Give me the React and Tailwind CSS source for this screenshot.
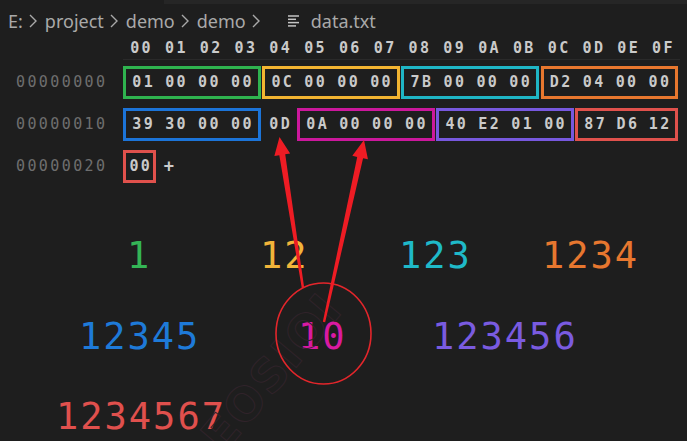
import React from "react";

const mono = { fontFamily: "'DejaVu Sans Mono', monospace" };

const header = ["00", "01", "02", "03", "04", "05", "06", "07", "08", "09", "0A", "0B", "0C", "0D", "0E", "0F"];

const Chevron = () => (
  <svg width="8" height="14" viewBox="0 0 8 14" className="ml-[6px] mr-[8px] shrink-0">
    <polyline points="1,1 7,7 1,13" fill="none" stroke="#a9a9a9" strokeWidth="1.4" />
  </svg>
);

const FileIcon = () => (
  <svg width="12" height="12" viewBox="0 0 12 12" className="ml-[20px] mr-[11px] shrink-0">
    <g stroke="#c5c5c5" strokeWidth="1.5">
      <line x1="0" y1="1" x2="11" y2="1" />
      <line x1="0" y1="4.3" x2="8" y2="4.3" />
      <line x1="0" y1="7.6" x2="11" y2="7.6" />
      <line x1="0" y1="10.9" x2="8" y2="10.9" />
    </g>
  </svg>
);

const Cell = ({ v }) => (
  <span className="w-[34.8px] shrink-0 text-center tracking-[2.4px] pl-[2.4px]">{v}</span>
);

const Group = ({ bytes, border, width }) => (
  <div className={`${width} shrink-0 flex`}>
    <div className={`h-[33px] flex-1 mr-[1.5px] border-[3px] ${border} flex items-center`}>
      {bytes.map((b, i) => (
        <span key={i} className="flex-1 text-center tracking-[2.4px] pl-[2.4px]">
          {b}
        </span>
      ))}
    </div>
  </div>
);

const Row = ({ addr, children }) => (
  <div className="h-[42px] flex items-center">
    <span className="w-[123px] shrink-0 pl-[16px] font-normal text-[#6e6e6e] tracking-[2.4px]">{addr}</span>
    {children}
  </div>
);

export default function App() {
  return (
    <div className="relative w-[687px] h-[441px] overflow-hidden bg-[#1e1e1e]">
      {/* tab strip remnant */}
      <div className="h-[4px] flex">
        <div className="w-[164px]" />
        <div className="flex-1 bg-[#262626]" />
      </div>

      {/* breadcrumb */}
      <div
        className="h-[34px] flex items-center pl-[8px] text-[18px] text-[#a9a9a9]"
        style={{ fontFamily: "'Noto Sans', sans-serif" }}
      >
        <span>E:</span>
        <Chevron />
        <span>project</span>
        <Chevron />
        <span>demo</span>
        <Chevron />
        <span>demo</span>
        <Chevron />
        <FileIcon />
        <span>data.txt</span>
      </div>

      {/* hex editor */}
      <div style={mono} className="text-[15px] text-[#cacaca] font-bold leading-none">
        <div className="h-[22px] flex items-center">
          <div className="w-[123px] shrink-0" />
          <div className="flex h-full items-center border-b border-[#2a2a2a]">
            {header.map((h) => (
              <Cell key={h} v={h} />
            ))}
          </div>
        </div>

        <div className="h-[1px]" />

        <Row addr="00000000">
          <Group width="w-[139.2px]" border="border-[#2fb34f]" bytes={["01", "00", "00", "00"]} />
          <Group width="w-[139.2px]" border="border-[#f2b431]" bytes={["0C", "00", "00", "00"]} />
          <Group width="w-[139.2px]" border="border-[#1fb6c6]" bytes={["7B", "00", "00", "00"]} />
          <Group width="w-[139.2px]" border="border-[#e8772e]" bytes={["D2", "04", "00", "00"]} />
        </Row>
        <Row addr="00000010">
          <Group width="w-[139.2px]" border="border-[#1c74d8]" bytes={["39", "30", "00", "00"]} />
          <Cell v="0D" />
          <Group width="w-[139.2px]" border="border-[#cc189c]" bytes={["0A", "00", "00", "00"]} />
          <Group width="w-[139.2px]" border="border-[#7758de]" bytes={["40", "E2", "01", "00"]} />
          <Group width="w-[104.4px]" border="border-[#e0514c]" bytes={["87", "D6", "12"]} />
        </Row>
        <Row addr="00000020">
          <Group width="w-[34.8px]" border="border-[#e0514c]" bytes={["00"]} />
          <span className="pl-[6px] text-[17px]">+</span>
        </Row>
      </div>

      {/* decoded values */}
      <div style={mono} className="text-[37px] leading-none tracking-[2px]">
        <div className="flex mt-[50px]">
          <span className="ml-[127px] w-[133px] text-[#34b556]">1</span>
          <span className="w-[139px] text-[#f1b43a]">12</span>
          <span className="w-[143px] text-[#1fb9c8]">123</span>
          <span className="text-[#e7772f]">1234</span>
        </div>
        <div className="flex mt-[44px]">
          <span className="ml-[79px] w-[219px] text-[#1e7ad8]">12345</span>
          <span className="w-[134px] text-[#d91aa2]">10</span>
          <span className="text-[#7a5be0]">123456</span>
        </div>
        <div className="flex mt-[43px]">
          <span className="ml-[56px] text-[#e0504d]">1234567</span>
        </div>
      </div>

      {/* watermark */}
      <div
        className="absolute left-[172px] top-[338px] w-[200px] text-center text-[46px] font-bold tracking-[2px] text-transparent rotate-[-50deg] [-webkit-text-stroke:1px_#30232a] pointer-events-none"
        style={{ fontFamily: "'DejaVu Sans', sans-serif" }}
      >
        EOSIOI
      </div>

      {/* annotations */}
      <svg className="absolute inset-0 pointer-events-none" width="687" height="441" viewBox="0 0 687 441">
        <ellipse cx="323.5" cy="333.5" rx="47.5" ry="50.5" fill="none" stroke="#e3262b" strokeWidth="1.6" />
        <polygon
          fill="#ee1c24"
          points="304.19,287.82 285.23,154.34 290.17,153.57 279.5,137 274.37,156.03 279.31,155.26 301.81,288.18"
        />
        <polygon
          fill="#ee1c24"
          points="325.17,322.26 363.07,158.22 367.95,159.3 364,140 352.33,155.86 357.21,156.94 322.83,321.74"
        />
      </svg>
    </div>
  );
}
